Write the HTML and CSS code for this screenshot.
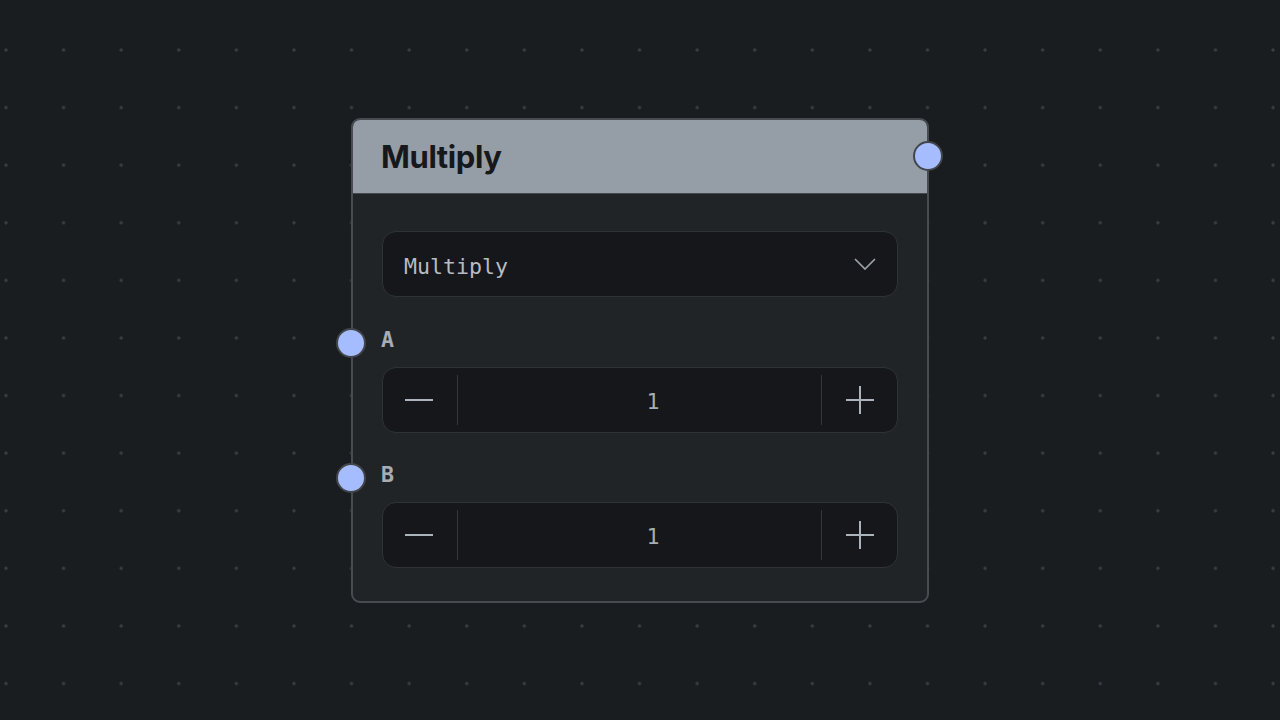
FILE: index.html
```html
<!DOCTYPE html>
<html>
<head>
  <title>Multiply node</title>
  <link rel="stylesheet" href="styles.css">
</head>
<body>
  <div class="canvas">
    <div class="node">
      <div class="node-header">
        <h1>Multiply</h1>
        <span class="handle handle-out"></span>
      </div>
      <div class="node-body">
        <div class="select">
          <span>Multiply</span>
          <svg class="chevron" width="22" height="12" viewBox="0 0 22 12">
            <path d="M1 1l10 10l10 -10"/>
          </svg>
        </div>

        <div class="field">
          <span class="handle handle-in"></span>
          <label>A</label>
          <div class="stepper">
            <button type="button" class="dec">
              <svg width="30" height="30" viewBox="0 0 30 30"><path d="M1 15h28"/></svg>
            </button>
            <span class="divider"></span>
            <span class="value">1</span>
            <span class="divider"></span>
            <button type="button" class="inc">
              <svg width="30" height="30" viewBox="0 0 30 30"><path d="M1 15h28M15 1v28"/></svg>
            </button>
          </div>
        </div>

        <div class="field">
          <span class="handle handle-in"></span>
          <label>B</label>
          <div class="stepper">
            <button type="button" class="dec">
              <svg width="30" height="30" viewBox="0 0 30 30"><path d="M1 15h28"/></svg>
            </button>
            <span class="divider"></span>
            <span class="value">1</span>
            <span class="divider"></span>
            <button type="button" class="inc">
              <svg width="30" height="30" viewBox="0 0 30 30"><path d="M1 15h28M15 1v28"/></svg>
            </button>
          </div>
        </div>
      </div>
    </div>
  </div>
</body>
</html>
```

FILE: styles.css
```css
html, body {
  margin: 0;
  height: 100%;
  }
body {
  background-color: #1a1d20;
  overflow: hidden;
  font-family: "DejaVu Sans Mono", "Liberation Mono", monospace;
  }
.canvas {
  position: relative;
  width: 1280px;
  height: 720px;
  background-image: radial-gradient(circle, #3b3f43 1.3px, transparent 1.9px);
  background-size: 57.6px 57.6px;
  background-position: -22.8px 21.2px;
  }
.node {
  position: absolute;
  left: 351px;
  top: 118px;
  width: 578px;
  box-sizing: border-box;
  border: 2px solid #484c51;
  border-radius: 9px;
  background: #212427;
  }
.node-header {
  position: relative;
  height: 73px;
  display: flex;
  align-items: center;
  padding: 0 29px 0 28px;
  background: #959ea6;
  border-bottom: 1px solid #44484d;
  border-radius: 7px 7px 0 0;
  }
.node-header h1 {
  margin: 0;
  font-family: Inter, "Liberation Sans", sans-serif;
  font-weight: 700;
  font-size: 31px;
  letter-spacing: -0.4px;
  color: #16181b;
  }
.node-body {
  display: flex;
  flex-direction: column;
  padding: 37px 29px 33px 29px;
  }
.select {
  display: flex;
  align-items: center;
  justify-content: space-between;
  height: 66px;
  box-sizing: border-box;
  padding: 5px 21px 0 21px;
  background: #15171a;
  border: 1px solid #2f3337;
  border-radius: 14px;
  font-size: 21.6px;
  color: #b6bcc2;
  }
.chevron {
  margin-top: -5px;
  }
.chevron path {
  fill: none;
  stroke: #9ba2a9;
  stroke-width: 1.7;
  }
.field {
  position: relative;
  margin-top: 30px;
  }
.field + .field {
  margin-top: 29px;
  }
.field label {
  display: block;
  height: 26px;
  line-height: 26px;
  margin-left: -1px;
  font-size: 21.6px;
  font-weight: bold;
  color: #a6adb4;
  }
.stepper {
  display: flex;
  align-items: stretch;
  height: 66px;
  box-sizing: border-box;
  margin-top: 14px;
  background: #15171a;
  border: 1px solid #2f3337;
  border-radius: 14px;
  }
.stepper button {
  display: flex;
  align-items: center;
  justify-content: center;
  padding: 0;
  background: none;
  border: none;
  }
.stepper .dec {
  width: 74px;
  padding-right: 2px;
  }
.stepper .inc {
  width: 75px;
  }
.stepper button path {
  fill: none;
  stroke: #acb3ba;
  stroke-width: 2;
  }
.divider {
  width: 1px;
  margin: 7px 0;
  background: #33373b;
  }
.value {
  flex: 1;
  display: flex;
  align-items: center;
  justify-content: center;
  padding: 2px 0 0 27px;
  font-size: 21.6px;
  color: #a6adb4;
  }
.handle {
  position: absolute;
  width: 26px;
  height: 26px;
  border: 2px solid #42464b;
  border-radius: 50%;
  background: #a5bcfe;
  }
.handle-out {
  right: -16px;
  top: 21px;
  }
.handle-in {
  left: -46px;
  top: 1px;
  }
```
